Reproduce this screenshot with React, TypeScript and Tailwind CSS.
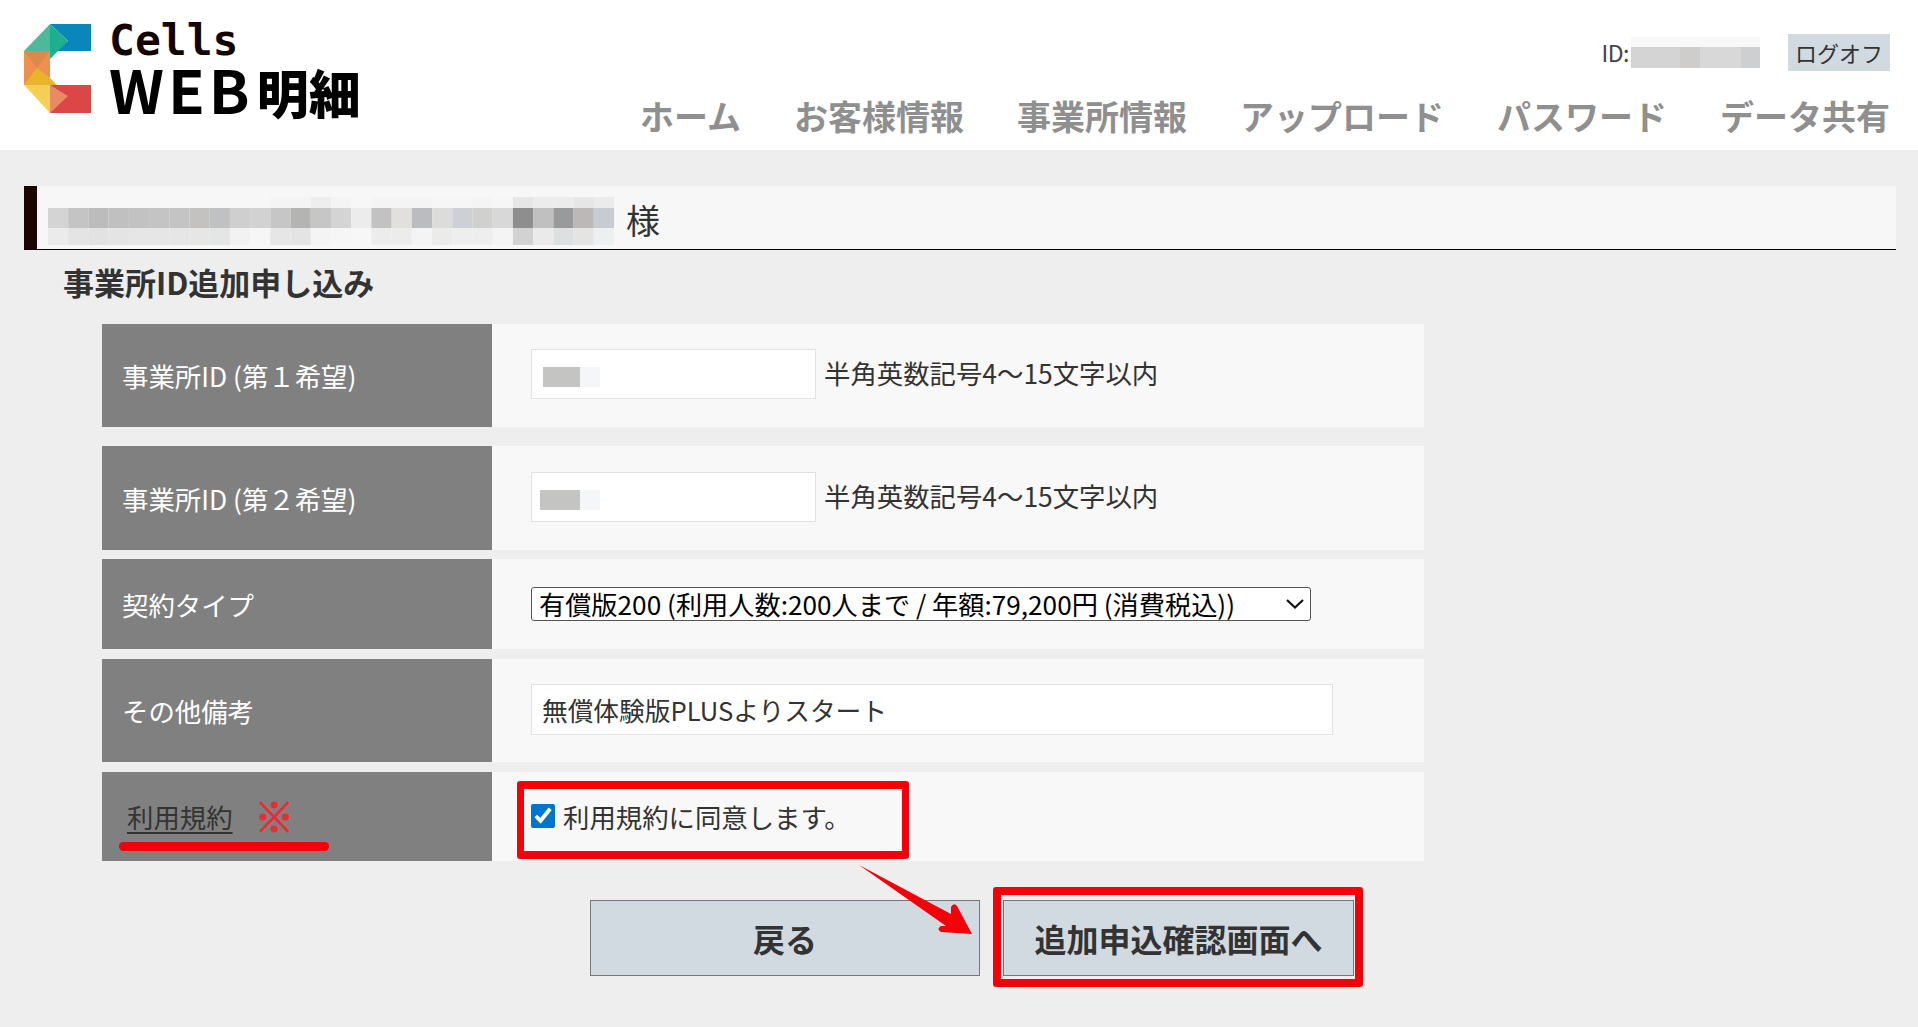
const font = { fontFamily: '"Noto Sans CJK JP", "Noto Sans", sans-serif' }

const navItems = ["ホーム", "お客様情報", "事業所情報", "アップロード", "パスワード", "データ共有"]

// pixelated name in the title bar: three bands of 20px cells
const nameMid = ["#d4d4d4", "#c4c4c4", "#bcbcbc", "#c0c0c0", "#c2c2c2", "#c4c4c4", "#c4c4c4", "#c4c2be", "#bfc1c3", "#cfcfcf", "#d2d2d2", "#c6c6c6", "#b4b4b2", "#c6c6c6", "#d4d4d4", "#ececec", "#c2c2c2", "#e2e0dc", "#babcbf", "#dcdcda", "#cdd0d4", "#d0d0ce", "#d8d8d8", "#8e8e8e", "#c0c0c0", "#989a9c", "#bcb8b8", "#c6ccd2"]
const nameLow = ["#ebebeb", "#e4e4e4", "#e2e2e2", "#e4e4e4", "#e6e6e6", "#e6e6e6", "#e6e6e6", "#e6e6e4", "#e4e6e6", "#f2f2f2", "#f6f6f6", "#e6e6e6", "#e4e4e4", "#f4f4f4", "#f6f6f6", "#f7f7f7", "#ececec", "#ececec", "#f4f4f4", "#ebebeb", "#eeeeee", "#eeeeee", "#f4f4f4", "#d2d2d2", "#eaeaea", "#dce0e0", "#e4e4e4", "#ecf0f0"]
const nameTop = ["#f7f7f7", "#f7f7f7", "#f7f7f7", "#f7f7f7", "#f7f7f7", "#f7f7f7", "#f7f7f7", "#f7f7f7", "#f7f7f7", "#f7f7f7", "#f7f7f7", "#f4f4f4", "#f4f4f4", "#eeeeee", "#f4f4f4", "#f7f7f7", "#f4f4f4", "#f4f4f4", "#f4f4f4", "#f6f6f6", "#f6f6f6", "#f4f4f4", "#f6f6f6", "#e6e6e6", "#ececec", "#ececec", "#e6e6e6", "#ebebeb"]

function Logo() {
  return (
    <svg width="68" height="90" viewBox="24 24 68 90" className="shrink-0">
      <polygon points="50,24 91,24 91,51 55,51 68,41" fill="#0a86ba" />
      <polygon points="50,24 24,51 50,51" fill="#4cb99d" />
      <polygon points="50,24 68,41 50,59" fill="#1eb08e" />
      <polygon points="24,51 50,51 50,85 24,85" fill="#f0904e" />
      <polygon points="24,51 50,51 37,68" fill="#d98a4c" />
      <polygon points="37,68 24,85 57,85 50,78" fill="#e8b52a" />
      <polygon points="24,85 50,85 50,113" fill="#f3d055" />
      <polygon points="50,85 91,85 91,113 50,113" fill="#dc4646" />
      <polygon points="50,85 68,96 50,113" fill="#e88a64" />
    </svg>
  )
}

function Arrow() {
  return (
    <svg className="absolute left-[855px] top-[860px]" width="125" height="80" viewBox="855 860 125 80">
      <path d="M859 865 L951 914 L951 907 Q954 902 957 906 L972 934 L941 932 Q936 929 941 926 L946 926 Z" fill="#f40008" />
    </svg>
  )
}

function Row({ label, h, className, children }: { label: React.ReactNode; h: string; className: string; children: React.ReactNode }) {
  return (
    <div className={`flex ${h} ${className}`}>
      <div className="flex w-[390px] shrink-0 items-center bg-[#808080] pl-[20px] pt-[1px] text-[26.4px] text-white">{label}</div>
      <div className="flex flex-1 items-center bg-[#f8f8f8] pl-[39px] text-[26.4px] text-[#333]">{children}</div>
    </div>
  )
}

function IdInput({ blurLeft, blurWidth }: { blurLeft: string; blurWidth: string }) {
  return (
    <div className="relative">
      <input readOnly className="block h-[50px] w-[285px] border border-[#e2e2e2] bg-white" />
      <div className={`absolute top-[18px] flex h-[20px] ${blurLeft}`}>
        <div className={`h-full ${blurWidth} bg-[#c4c4c2]`} />
        <div className="h-full w-[20px] bg-[#f5f6f7]" />
      </div>
    </div>
  )
}

export default function App() {
  return (
    <div className="relative min-h-[1027px] overflow-hidden bg-[#eeeeee]" style={font}>
      <header className="flex h-[150px] items-start justify-between bg-white pl-[24px] pr-[28px] pt-[24px]">
        <div className="flex gap-[17px]">
          <Logo />
          <div className="text-[#140400]">
            <div className="-mt-[1px] font-['DejaVu_Sans_Mono'] text-[43px] font-bold leading-[34px]">Cells</div>
            <div className="mt-[5px] flex items-baseline font-bold leading-[52px] text-black">
              <span className="text-[60px] tracking-[4px]">WEB</span>
              <span className="ml-[3px] text-[52px] font-black">明細</span>
            </div>
          </div>
        </div>
        <div className="flex flex-col items-end">
          <div className="mt-[10px] flex h-[37px] items-center">
            <span className="text-[23px] tracking-[-0.5px] text-[#444]">ID:</span>
            <svg width="129" height="31" className="ml-[2px]">
              <rect width="129" height="10" fill="#f8f8f8" />
              <rect y="10" width="49" height="21" fill="#d4d4d4" />
              <rect x="49" y="10" width="20" height="21" fill="#cfcdcb" />
              <rect x="69" y="10" width="41" height="21" fill="#d8d8d8" />
              <rect x="110" y="10" width="19" height="21" fill="#cdcfd0" />
            </svg>
            <button className="ml-[28px] h-[37px] w-[102px] bg-[#d1dae0] text-[22px] text-[#333]">ログオフ</button>
          </div>
          <nav className="mt-[22px] flex gap-[53px] text-[34px] font-bold leading-[46px] text-[#8f8f8f]">
            {navItems.map((item) => (
              <span key={item}>{item}</span>
            ))}
          </nav>
        </div>
      </header>

      <main className="pl-[24px] pr-[22px] pt-[36px]">
        <div className="flex h-[64px] border-b border-black bg-[#f7f7f7]">
          <div className="w-[13px] bg-[#1a0500]" />
          <svg width="566" height="48" viewBox="0 0 560 48" preserveAspectRatio="none" className="ml-[11px] mt-[11px] shrink-0">
            {nameMid.map((c, i) => (
              <g key={i}>
                <rect x={i * 20} y="0" width="20" height="11" fill={nameTop[i]} />
                <rect x={i * 20} y="11" width="20" height="20" fill={c} />
                <rect x={i * 20} y="31" width="20" height="17" fill={nameLow[i]} />
              </g>
            ))}
          </svg>
          <span className="ml-[12px] self-center pt-[4px] text-[34px] text-[#333]">様</span>
        </div>

        <h2 className="ml-[39px] mt-[9px] text-[31px] font-bold leading-[46px] text-[#333]">事業所ID追加申し込み</h2>

        <div className="ml-[78px] mt-[19px] w-[1322px]">
          <Row h="h-[103px]" className="" label="事業所ID (第１希望)">
            <div className="mb-[3px] flex items-center">
              <IdInput blurLeft="left-[12px]" blurWidth="w-[37px]" />
              <span className="mb-[2px] ml-[8px]">半角英数記号4～15文字以内</span>
            </div>
          </Row>
          <Row h="h-[104px]" className="mt-[19px]" label="事業所ID (第２希望)">
            <div className="mb-[3px] flex items-center">
              <IdInput blurLeft="left-[9px]" blurWidth="w-[40px]" />
              <span className="mb-[2px] ml-[8px]">半角英数記号4～15文字以内</span>
            </div>
          </Row>
          <Row h="h-[90px]" className="mt-[9px]" label="契約タイプ">
            <div className="relative">
              <select className="block h-[34px] w-[780px] appearance-none rounded-[3px] border border-[#555] bg-white py-0 pl-[7px] text-[26.2px] leading-[32px] text-black">
                <option>有償版200 (利用人数:200人まで / 年額:79,200円 (消費税込))</option>
              </select>
              <svg className="absolute right-[7px] top-[11px]" width="18" height="12" viewBox="0 0 18 12" fill="none">
                <path d="M1 2 L9 9.5 L17 2" stroke="#111" strokeWidth="2.2" />
              </svg>
            </div>
          </Row>
          <Row h="h-[103px]" className="mt-[10px]" label="その他備考">
            <input readOnly value="無償体験版PLUSよりスタート" className="mb-[3px] h-[51px] w-[802px] border border-[#e2e2e2] bg-white pl-[10px] text-[25.7px] text-[#333]" />
          </Row>
          <Row
            h="h-[89px]"
            className="mt-[10px]"
            label={
              <div className="flex items-center">
                <span className="ml-[5px] text-[#333] underline underline-offset-4">利用規約</span>
                <span className="ml-[22px] -mt-[3px] text-[40px] font-black leading-[40px] text-[#ee2a33] [-webkit-text-stroke:1px_#ee2a33]">※</span>
              </div>
            }
          >
            <label className="flex items-center">
              <input type="checkbox" defaultChecked readOnly className="h-[24px] w-[24px] accent-[#0075ce]" />
              <span className="ml-[8px]">利用規約に同意します。</span>
            </label>
          </Row>
        </div>

        <div className="ml-[566px] mt-[39px] flex gap-[23px]">
          <button className="h-[76px] w-[390px] border border-[#777] bg-[#d1dae0] text-[32px] font-bold text-[#333]">戻る</button>
          <button className="h-[76px] w-[351px] border border-[#777] bg-[#d1dae0] text-[32px] font-bold text-[#333]">追加申込確認画面へ</button>
        </div>
      </main>

      {/* red annotations drawn over the page */}
      <div className="absolute left-[119px] top-[842px] h-[9px] w-[210px] rounded-full bg-[#f40008]" />
      <div className="absolute left-[517px] top-[781px] h-[78px] w-[392px] rounded-[3px] border-x-[7px] border-y-[8px] border-[#f40008]" />
      <div className="absolute left-[993px] top-[887px] h-[100px] w-[370px] rounded-[3px] border-[8px] border-[#f40008]" />
      <Arrow />
    </div>
  )
}
